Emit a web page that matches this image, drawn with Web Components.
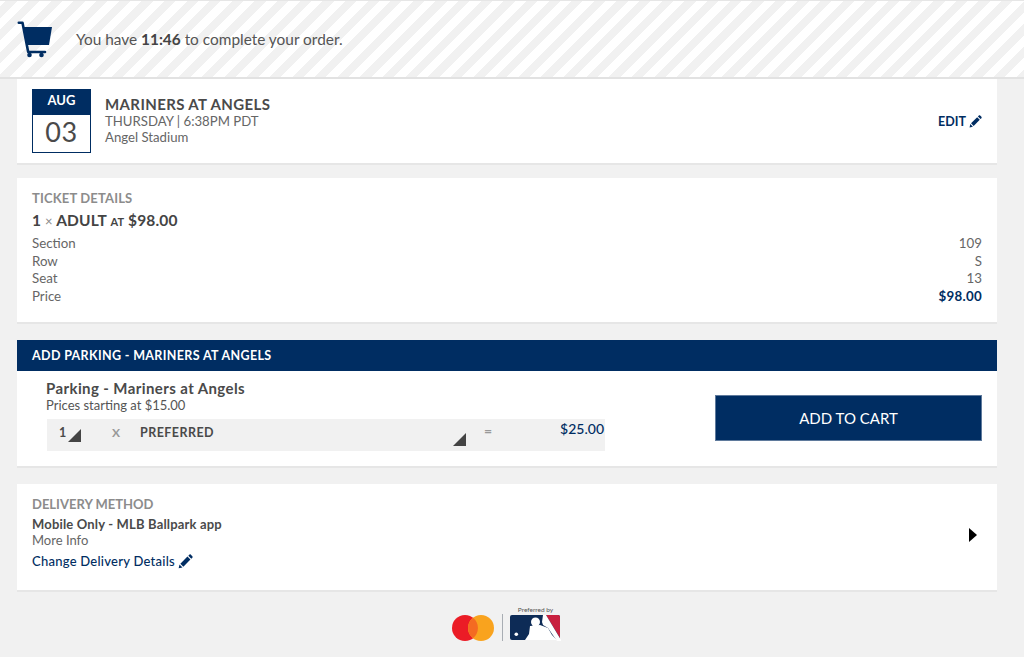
<!DOCTYPE html>
<html lang="en">
<head>
<meta charset="utf-8">
<title>Checkout</title>
<style>
  html, body {
    margin: 0;
    height: 657px;
    overflow: hidden;
    background: #f1f1f1;
    font-family: Lato, "Liberation Sans", sans-serif;
    color: #4a4a4a;
  }
</style>
</head>
<body>
<timer-bar>You have <b>11:46</b> to complete your order.</timer-bar>
<main-column>
  <event-card month="AUG" day="03" name="MARINERS AT ANGELS" when="THURSDAY | 6:38PM PDT" venue="Angel Stadium"></event-card>
  <ticket-card></ticket-card>
  <parking-card></parking-card>
  <delivery-card></delivery-card>
</main-column>
<sponsor-footer></sponsor-footer>

<script>
const PENCIL = `<svg viewBox="0 0 14 14"><path fill="#002d62" d="M0.6 13.4l0.8-3.6 2.8 2.8zM2.2 9l6.6-6.6 2.8 2.8-6.6 6.6zM9.6 1.6l1-1c.4-.4 1-.4 1.4 0l1.4 1.4c.4.4.4 1 0 1.4l-1 1z"/></svg>`

/**
 * Creates a shadow root from a string of markup.
 *
 * @param {HTMLElement} host - The element that gets the root.
 * @param {string} html - The markup.
 */
function render (host, html) {
  host.attachShadow({ mode: 'open' }).innerHTML = html
}

customElements.define('timer-bar', class extends HTMLElement {
  constructor () {
    super()
    render(this, `<style>
      :host {
        display: flex;
        align-items: center;
        box-sizing: border-box;
        height: 79px;
        padding-left: 17px;
        border-top: 1px solid #e6e6e6;
        border-bottom: 2px solid #e2e2e2;
        background: repeating-linear-gradient(135deg, #fff 0 4.24px, #f1f1f1 4.24px 12.24px, #fff 12.24px 16px);
        font-size: 15.4px;
        color: #555;
      }
      svg { flex: none; margin-right: 23px; }
      ::slotted(b) { color: #444; }
    </style>
    <svg viewBox="0 0 36 37" width="36" height="37">
      <path fill="none" stroke="#002d62" stroke-width="2.6" stroke-linecap="round" stroke-linejoin="round" d="M1.8 1.800H5.500L11.200 31H28"/>
      <path fill="#002d62" d="M6.500 6H35L32 24H10z"/>
      <circle fill="#002d62" cx="12.500" cy="34" r="2.300"/>
      <circle fill="#002d62" cx="24.500" cy="34" r="2.300"/>
    </svg>
    <span><slot></slot></span>`)
  }
})

customElements.define('main-column', class extends HTMLElement {
  constructor () {
    super()
    render(this, `<style>
      :host {
        display: flex;
        flex-direction: column;
        margin: 0 27px 0 17px;
      }
    </style><slot></slot>`)
  }
})

customElements.define('event-card', class extends HTMLElement {
  connectedCallback () {
    const a = name => this.getAttribute(name)
    render(this, `<style>
      :host {
        display: flex;
        align-items: flex-start;
        box-sizing: border-box;
        height: 86px;
        margin-bottom: 13px;
        padding: 10px 15px 0;
        background: #fff;
        border-bottom: 2px solid #e6e6e6;
      }
      .date {
        box-sizing: border-box;
        width: 59px;
        height: 64px;
        border: 1px solid #002d62;
        text-align: center;
        flex: none;
      }
      .month {
        height: 25px;
        line-height: 21px;
        background: #002d62;
        color: #fff;
        font-size: 13px;
        font-weight: 700;
      }
      .day { font-size: 27px; line-height: 34px; color: #4a4a4a; letter-spacing: .5px; }
      .info { margin-left: 14px; flex: 1; padding-top: 7px; }
      .name { font-size: 15px; font-weight: 700; line-height: 17px; letter-spacing: .38px; }
      .when, .venue { font-size: 13.2px; line-height: 16px; color: #666; }
      .edit {
        display: flex;
        align-items: center;
        gap: 3px;
        align-self: center;
        margin-top: -9px;
        font-size: 12.5px;
        font-weight: 700;
        color: #002d62;
      }
      .edit svg { width: 13px; height: 13px; }
    </style>
    <div class="date"><div class="month">${a('month')}</div><div class="day">${a('day')}</div></div>
    <div class="info">
      <div class="name">${a('name')}</div>
      <div class="when">${a('when')}</div>
      <div class="venue">${a('venue')}</div>
    </div>
    <div class="edit">EDIT ${PENCIL}</div>`)
  }
})

customElements.define('ticket-card', class extends HTMLElement {
  constructor () {
    super()
    const rows = [['Section', '109'], ['Row', 'S'], ['Seat', '13'], ['Price', '$98.00']]
    render(this, `<style>
      :host {
        display: block;
        box-sizing: border-box;
        height: 146px;
        margin-bottom: 16px;
        padding: 12px 15px 0;
        background: #fff;
        border-bottom: 2px solid #e6e6e6;
      }
      h2 { margin: 0; font-size: 13px; line-height: 16px; font-weight: 700; color: #8c8c8c; letter-spacing: .15px; }
      .line { margin: 5px 0 4px; font-size: 15.5px; line-height: 19px; font-weight: 700; color: #444; letter-spacing: .15px; }
      .line i { font-style: normal; font-weight: 400; color: #888; font-size: 13px; }
      .line small { font-size: 11px; }
      .row {
        display: flex;
        justify-content: space-between;
        font-size: 13.3px;
        line-height: 17.5px;
        color: #666;
      }
      .row:last-child b { color: #002d62; font-weight: 700; letter-spacing: .3px; }
      .row b { font-weight: 400; }
    </style>
    <h2>TICKET DETAILS</h2>
    <div class="line">1 <i>×</i> ADULT <small>AT</small> $98.00</div>
    ${rows.map(([k, v]) => `<div class="row"><span>${k}</span><b>${v}</b></div>`).join('')}`)
  }
})

customElements.define('parking-card', class extends HTMLElement {
  constructor () {
    super()
    render(this, `<style>
      :host {
        display: block;
        box-sizing: border-box;
        height: 128px;
        margin-bottom: 16px;
        background: #fff;
        border-bottom: 2px solid #e6e6e6;
      }
      header {
        height: 31px;
        line-height: 32px;
        padding-left: 15px;
        background: #002d62;
        color: #fff;
        font-size: 12.5px;
        font-weight: 700;
        letter-spacing: .35px;
      }
      .body {
        display: flex;
        justify-content: space-between;
        align-items: flex-start;
        padding: 7px 15px 0 30px;
      }
      .name { font-size: 15px; font-weight: 700; line-height: 20px; letter-spacing: .4px; margin-left: -1px; }
      .from { font-size: 13px; line-height: 14px; color: #555; margin-left: -1px; }
      .picker {
        position: relative;
        display: grid;
        grid-template-columns: 65px 28px 1fr 120px;
        width: 558px;
        height: 32px;
        margin-top: 7px;
        font-size: 12.5px;
        line-height: 27px;
        font-weight: 700;
        background: #f1f1f1;
      }
      .qty { padding-left: 12px; }
      .x { color: #999; font-size: 12px; }
      .pref { letter-spacing: .45px; }
      .tri {
        position: absolute;
        width: 0;
        height: 0;
        border-style: solid;
        border-width: 0 0 13px 13px;
        border-color: transparent transparent #444 transparent;
      }
      .eq { color: #999; position: absolute; left: 437px; top: -2px; font-size: 14px; }
      .total { position: absolute; right: 1px; top: -4px; font-size: 14px; font-weight: 500; color: #002d62; }
      .add {
        width: 267px;
        height: 46px;
        margin-top: 17px;
        border: 1px solid #5f7a9c;
        background: #002d62;
        color: #fff;
        font: 400 15px Lato, "Liberation Sans", sans-serif;
      }
    </style>
    <header>ADD PARKING - MARINERS AT ANGELS</header>
    <div class="body">
      <div>
        <div class="name">Parking - Mariners at Angels</div>
        <div class="from">Prices starting at $15.00</div>
        <div class="picker">
          <span class="qty">1</span>
          <span class="x">X</span>
          <span class="pref">PREFERRED</span>
          <span class="tri" style="left:21px;top:10px"></span>
          <span class="tri" style="left:406px;top:14px"></span>
          <span class="eq">=</span>
          <span class="total">$25.00</span>
        </div>
      </div>
      <button class="add">ADD TO CART</button>
    </div>`)
  }
})

customElements.define('delivery-card', class extends HTMLElement {
  constructor () {
    super()
    render(this, `<style>
      :host {
        display: flex;
        justify-content: space-between;
        align-items: center;
        box-sizing: border-box;
        height: 108px;
        padding: 12px 20px 0 15px;
        background: #fff;
        border-bottom: 2px solid #e6e6e6;
        font-size: 13px;
      }
      .wrap { align-self: flex-start; }
      h2 { margin: 0 0 4px; font-size: 13px; line-height: 16px; font-weight: 700; color: #8c8c8c; }
      .mobile { font-weight: 700; line-height: 16px; letter-spacing: .17px; }
      .more { line-height: 16px; color: #666; }
      .change { display: flex; align-items: center; gap: 3px; margin-top: 4px; line-height: 18px; color: #002d62; font-weight: 500; letter-spacing: .25px; }
      .change svg { width: 15px; height: 15px; }
      .arrow { width: 0; height: 0; margin-top: -17px; border-style: solid; border-width: 7px 0 7px 8px; border-color: transparent transparent transparent #000; }
    </style>
    <div class="wrap">
      <h2>DELIVERY METHOD</h2>
      <div class="mobile">Mobile Only - MLB Ballpark app</div>
      <div class="more">More Info</div>
      <div class="change">Change Delivery Details ${PENCIL}</div>
    </div>
    <div class="arrow"></div>`)
  }
})

customElements.define('sponsor-footer', class extends HTMLElement {
  constructor () {
    super()
    render(this, `<style>
      :host {
        display: flex;
        justify-content: center;
        align-items: flex-start;
        box-sizing: border-box;
        height: 65px;
        padding-top: 12px;
        margin-right: 11px;
      }
      svg { display: block; }
      .by { font-size: 6.5px; line-height: 11px; color: #555; text-align: center; }
      .marks { display: flex; align-items: center; margin-top: 10px; }
      .rule { width: 1px; height: 27px; background: #a8adb3; margin: 0 7px 0 8px; }
    </style>
    <div class="marks">
      <svg viewBox="0 0 42 26" width="42" height="26">
        <circle cx="13" cy="13" r="13" fill="#eb1c26"/>
        <circle cx="29" cy="13" r="13" fill="#f9a31e"/>
        <path fill="#f46b22" d="M21 2.800a13 13 0 0 1 0 20.400a13 13 0 0 1 0-20.400z"/>
      </svg>
      <div class="rule"></div>
    </div>
    <div>
      <div class="by">Preferred by</div>
      <svg viewBox="0 0 51 26" width="51" height="26">
        <rect width="50" height="25" rx="2" fill="#0d2b56"/>
        <path fill="#c8203f" d="M36 0h12a2 2 0 0 1 2 2v21z"/>
        <path fill="#fff" d="M33 0h3l15 25v1h-4l-9-13-5-3-1-3z"/>
        <circle cx="25.500" cy="7" r="4.500" fill="#fff"/>
        <path fill="#fff" d="M20 11l10-1 8 3 4 7 5 5H15l4-6z"/>
        <circle cx="6.300" cy="19.300" r="1.800" fill="#fff"/>
      </svg>
    </div>`)
  }
})
</script>
</body>
</html>
